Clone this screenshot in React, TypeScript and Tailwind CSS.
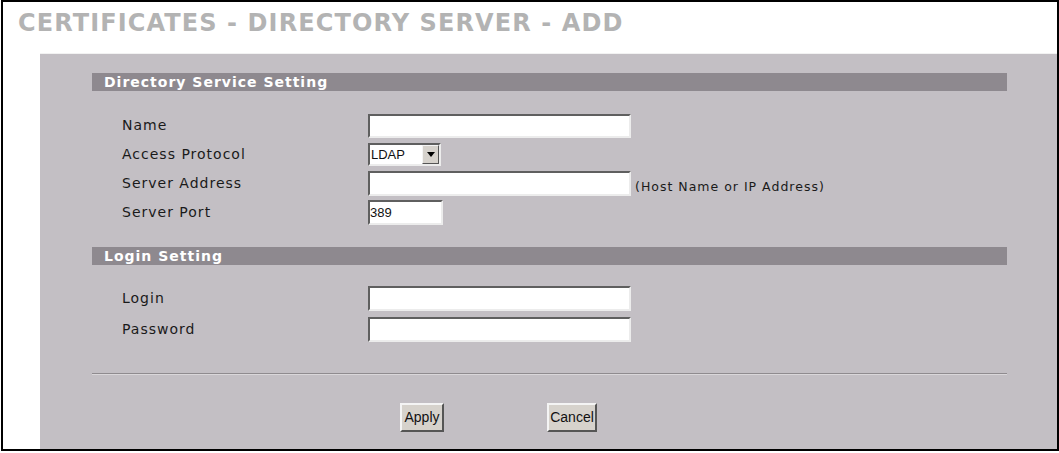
import React from "react";

const inputCls =
  "h-[24px] bg-white border-2 border-solid border-t-[#5f5f5f] border-l-[#5f5f5f] border-r-[#ececec] border-b-[#ececec] box-border";

function Row({ label, h, children }: { label: string; h: string; children: React.ReactNode }) {
  return (
    <div className={`flex items-center ${h}`}>
      <div className="w-[276px] pl-[30px] text-[14px] tracking-[1px] text-[#1a1a1a]">{label}</div>
      {children}
    </div>
  );
}

function Bar({ title }: { title: string }) {
  return (
    <div className="h-[18px] bg-[#8e898f] flex items-center pl-[12px] text-white font-bold text-[14px] tracking-[1px] leading-none">
      {title}
    </div>
  );
}

function Btn({ label, w }: { label: string; w: string }) {
  return (
    <div
      className={`${w} h-[29px] flex items-center justify-center bg-[#d6d2cc] border-2 border-solid border-t-[#f4f4f4] border-l-[#f4f4f4] border-r-[#555] border-b-[#555] text-[14px] text-[#111]`}
      style={{ fontFamily: '"Liberation Sans", Arial, sans-serif' }}
    >
      {label}
    </div>
  );
}

export default function App() {
  return (
    <div className="w-[1059px] h-[453px] bg-white" style={{ fontFamily: '"DejaVu Sans", Verdana, sans-serif' }}>
      <div className="ml-[1px] w-[1058px] h-[451px] border-2 border-black flex flex-col bg-white">
        <div className="h-[51px] pl-[15px] pt-[9px] text-[24px] leading-[24px] font-bold tracking-[1.1px] text-[#b3b3b3]">
          CERTIFICATES - DIRECTORY SERVER - ADD
        </div>
        <div className="flex-1 ml-[37px] bg-[#c3bfc4] border-t border-[#f2f2f2] pl-[52px] pr-[50px] pt-[19px]">
          <Bar title="Directory Service Setting" />
          <div className="mt-[20px]">
            <Row label="Name" h="h-[29px]">
              <div className={`${inputCls} w-[263px]`} />
            </Row>
            <Row label="Access Protocol" h="h-[29px]">
              <div
                className="w-[73px] h-[23px] bg-white border-2 border-solid border-t-[#5f5f5f] border-l-[#5f5f5f] border-r-[#ececec] border-b-[#ececec] flex items-center"
                style={{ fontFamily: '"Liberation Sans", Arial, sans-serif' }}
              >
                <span className="flex-1 pl-[1px] text-[13px] text-[#111]">LDAP</span>
                <div className="w-[17px] h-[19px] bg-[#d6d2cc] border border-solid border-t-[#f4f4f4] border-l-[#f4f4f4] border-r-[#555] border-b-[#555] flex items-center justify-center">
                  <svg width="8" height="5" viewBox="0 0 8 5">
                    <path d="M0 0 H8 L4 5 Z" fill="#000" />
                  </svg>
                </div>
              </div>
            </Row>
            <Row label="Server Address" h="h-[29px]">
              <div className={`${inputCls} w-[263px] h-[25px]`} />
              <span className="ml-[4px] pt-[8px] text-[12.5px] tracking-[1px] text-[#1a1a1a]">(Host Name or IP Address)</span>
            </Row>
            <Row label="Server Port" h="h-[29px]">
              <div
                className={`${inputCls} w-[75px] h-[25px] flex items-center text-[13px] text-[#111]`}
                style={{ fontFamily: '"Liberation Sans", Arial, sans-serif' }}
              >
                389
              </div>
            </Row>
          </div>
          <div className="mt-[20px]">
            <Bar title="Login Setting" />
          </div>
          <div className="mt-[18px]">
            <Row label="Login" h="h-[31px]">
              <div className={`${inputCls} w-[263px] h-[25px]`} />
            </Row>
            <Row label="Password" h="h-[31px]">
              <div className={`${inputCls} w-[263px] h-[25px]`} />
            </Row>
          </div>
          <div className="mt-[28px] h-[2px] border-t border-[#8f8b8f] border-b border-b-[#dad7da]" />
          <div className="mt-[28px] flex pl-[308px] gap-[103px]">
            <Btn label="Apply" w="w-[44px]" />
            <Btn label="Cancel" w="w-[50px]" />
          </div>
        </div>
      </div>
    </div>
  );
}
